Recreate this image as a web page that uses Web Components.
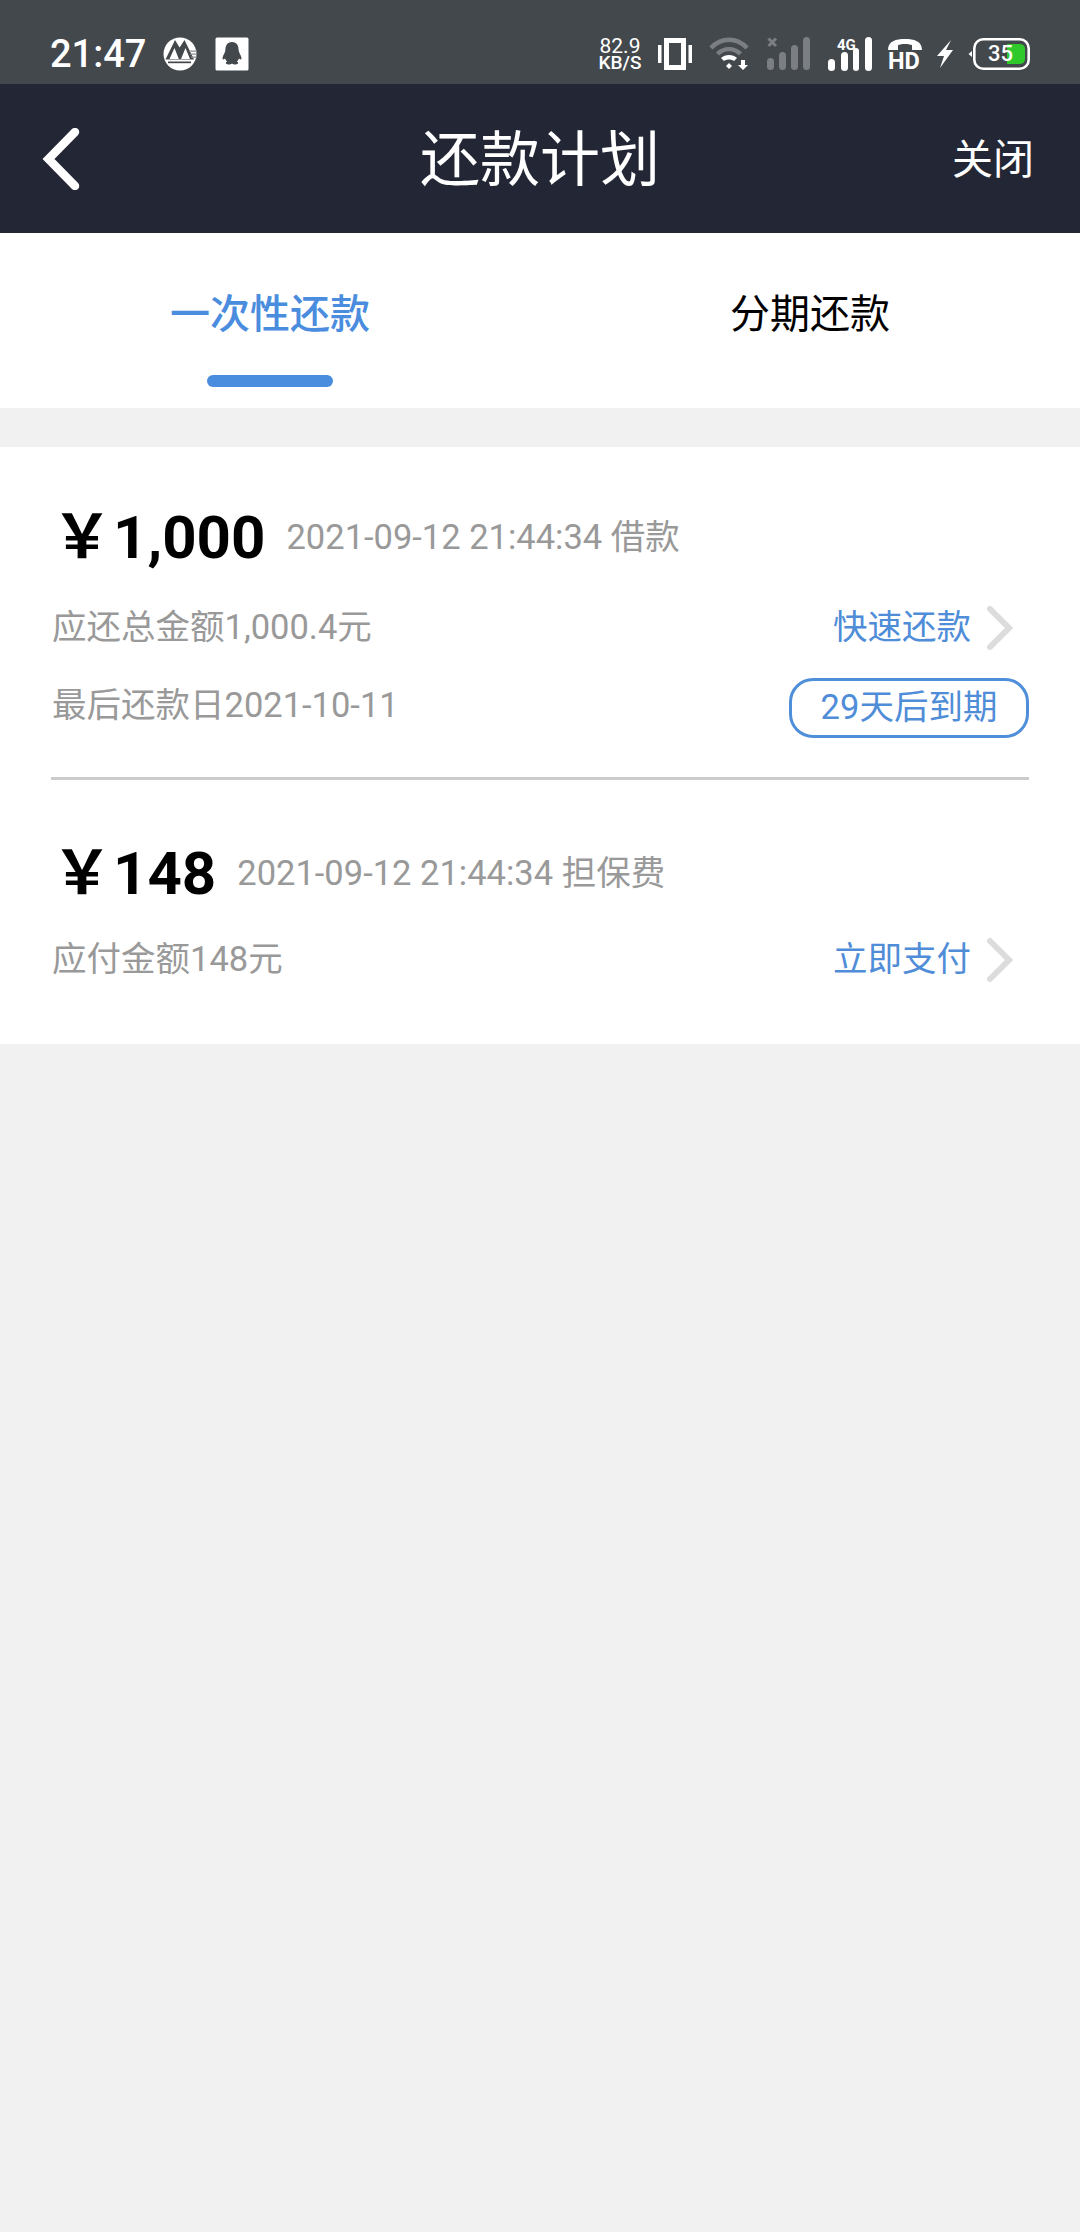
<!DOCTYPE html>
<html>
<head>
<meta charset="utf-8">
<style>
html, body { margin: 0; padding: 0; background: #f1f1f1; }
body { width: 1080px; height: 2232px; overflow: hidden; font-family: Roboto, "Noto Sans CJK SC", sans-serif; }
</style>
</head>
<body>
<status-bar></status-bar>
<nav-bar>还款计划<span slot="action">关闭</span></nav-bar>
<tab-bar>
    <tab-item active>一次性还款</tab-item>
    <tab-item>分期还款</tab-item>
</tab-bar>
<repay-list>
    <repay-item amount="1,000" date="2021-09-12 21:44:34 借款" detail="应还总金额1,000.4元" action="快速还款" due="最后还款日2021-10-11" badge="29天后到期"></repay-item>
    <repay-item tight amount="148" date="2021-09-12 21:44:34 担保费" detail="应付金额148元" action="立即支付"></repay-item>
</repay-list>

<script>
const FONT = 'Roboto, "Noto Sans CJK SC", sans-serif';

class StatusBar extends HTMLElement {
    constructor() {
        super();
        this.attachShadow({ mode: 'open' });
        this.shadowRoot.innerHTML = `
        <style>
            :host { display: flex; box-sizing: border-box; height: 84px; padding: 24px 50px 0 50px; background: #43484c; color: #fff; align-items: center; font-family: ${FONT}; }
            .time { font-size: 38px; font-weight: 500; line-height: 60px; width: 113px; }
            .left, .right { display: flex; align-items: center; }
            .left { gap: 18px; }
            .spacer { flex: 1; }
            .speed { width: 46px; font-size: 19px; font-weight: 500; line-height: 15px; text-align: center; }
            .speed b { display: block; font-size: 21px; font-weight: 400; line-height: 17px; }
            svg { display: block; }
            .bat { position: relative; width: 62px; height: 34px; }
            .bat span { position: absolute; left: 20px; top: 3px; font-size: 22px; line-height: 28px; font-weight: 500; }
        </style>
        <div class="time">21:47</div>
        <div class="left">
            <svg width="34" height="34" viewBox="0 0 34 34">
                <circle cx="17" cy="17" r="16.5" fill="#fff"/>
                <path d="M2.5 22.5 L12 3 L16.6 10.5 L21.5 3 L31 22.5 Z" fill="#43484c"/>
                <path d="M6.5 22 L11.5 11 L15.8 22 Z M18 22 L22.5 11 L27 22 Z" fill="#fff"/>
                <path d="M26 13.5h8v1.2h-8z M27 16.5h7v1.2h-7z M28 19.5h6v1.2h-6z" fill="#8b8e91"/>
                <rect x="5" y="24.5" width="23" height="1.7" fill="#43484c"/>
            </svg>
            <svg width="34" height="34" viewBox="0 0 34 34"><rect x="0.5" y="0.5" width="33" height="33" rx="1.5" fill="#fff"/><path d="M17 5 C12 5 10.4 9 10.4 13 C10.4 15 8.4 17.5 7.6 20.5 C7.2 22.6 8.4 23 10 21.4 C10.5 22.8 11.2 23.8 12.2 24.5 C10.3 25.2 10.3 27.4 13.4 27.4 C15 27.4 16.2 27 17 26.4 C17.8 27 19 27.4 20.6 27.4 C23.7 27.4 23.7 25.2 21.8 24.5 C22.8 23.8 23.5 22.8 24 21.4 C25.6 23 26.8 22.6 26.4 20.5 C25.6 17.5 23.6 15 23.6 13 C23.6 9 22 5 17 5 Z" fill="#43484c"/></svg>
        </div>
        <div class="spacer"></div>
        <div class="right">
            <div class="speed"><b>82.9</b>KB/S</div>
            <svg style="margin-left:15px" width="34" height="32" viewBox="0 0 34 32" fill="#fff"><rect x="0" y="7" width="3.5" height="18"/><rect x="30.5" y="7" width="3.5" height="18"/><path fill-rule="evenodd" d="M6 0H28V32H6Z M11 5V27H23V5Z"/></svg>
            <svg style="margin-left:17px" width="41" height="34" viewBox="0 0 41 34"><path d="M2 11 C12 0 28 0 38 11 M8.5 17 C15 10.5 25 10.5 31.5 17" fill="none" stroke="#7b7f83" stroke-width="4.4"/><path d="M12 21 C16 17 24 17 28 21 L25 24 C22 22 18 22 15 24 Z" fill="#fff"/><path d="M17 29 L20 26 L23 29 L20 32 Z" fill="#fff"/><path d="M32 23 H36 V28 H39 L34 33 L29 28 H32 Z" fill="#fff"/></svg>
            <svg style="margin-left:17px" width="43" height="34" viewBox="0 0 43 34" fill="#7b7f83"><rect x="0" y="21" width="7" height="12" rx="3.5"/><rect x="12" y="15" width="7" height="18" rx="3.5"/><rect x="24" y="8" width="7" height="25" rx="3.5"/><rect x="36" y="0" width="7" height="33" rx="3.5"/><path d="M1.5 1.5 L9 9 M9 1.5 L1.5 9" stroke="#7b7f83" stroke-width="3"/></svg>
            <svg style="margin-left:18px" width="44" height="36" viewBox="0 0 44 36" fill="#fff"><rect x="0" y="23" width="7" height="12" rx="3.5"/><rect x="13" y="16" width="7" height="19" rx="3.5"/><rect x="25" y="12" width="6" height="23" rx="3"/><rect x="37" y="1" width="7" height="34" rx="3.5"/><text x="9" y="14" font-family="Roboto" font-size="15" font-weight="700" fill="#fff">4G</text></svg>
            <svg style="margin-left:16px;margin-right:-2px" width="36" height="44" viewBox="0 0 36 44" fill="#fff"><path d="M0 18 C0 9 8 7 17 7 C26 7 34 9 34 18 L24 18 L24 13 C20 11.5 14 11.5 10 13 L10 18 Z"/><text x="0" y="37" font-family="Roboto" font-size="23.5" font-weight="700" fill="#fff">HD</text></svg>
            <svg style="margin-left:15px" width="16" height="28" viewBox="0 0 16 28" fill="#fff"><path d="M14 0 L0 16 L7 16 L3 28 L16 10 L9 10 Z"/></svg>
            <div class="bat" style="margin-left:15px">
                <svg width="62" height="34" viewBox="0 0 62 34"><rect x="6.3" y="2.3" width="54.4" height="29.4" rx="9" fill="none" stroke="#fff" stroke-width="2.6"/><path d="M0.5 17 L4 14 V20 Z" fill="#fff"/><path d="M39 7 H51 Q57 7 57 12 V22 Q57 27 51 27 H39 Z" fill="#2fc92c"/></svg>
                <span>35</span>
            </div>
        </div>`;
    }
}

class NavBar extends HTMLElement {
    constructor() {
        super();
        this.attachShadow({ mode: 'open' });
        this.shadowRoot.innerHTML = `
        <style>
            :host { display: grid; grid-template-columns: 1fr auto 1fr; align-items: center; box-sizing: border-box; height: 149px; padding: 0 46px; background: #232735; color: #fff; font-family: ${FONT}; }
            svg { display: block; margin-left: -4px; }
            .title { font-size: 60px; line-height: 70px; margin-top: 4px; }
            .action { justify-self: end; font-size: 41px; line-height: 50px; margin-top: 2px; }
        </style>
        <svg width="38" height="62" viewBox="0 0 38 62"><path d="M33 4 L6.5 31 L33 58" fill="none" stroke="#fff" stroke-width="8.5" stroke-linecap="round" stroke-linejoin="miter"/></svg>
        <div class="title"><slot></slot></div>
        <div class="action"><slot name="action"></slot></div>`;
    }
}

class TabBar extends HTMLElement {
    constructor() {
        super();
        this.attachShadow({ mode: 'open' });
        this.shadowRoot.innerHTML = `
        <style>
            :host { display: grid; grid-template-columns: 1fr 1fr; height: 175px; background: #fff; margin-bottom: 39px; }
        </style>
        <slot></slot>`;
    }
}

class TabItem extends HTMLElement {
    constructor() {
        super();
        this.attachShadow({ mode: 'open' });
        this.shadowRoot.innerHTML = `
        <style>
            :host { display: flex; flex-direction: column; align-items: center; box-sizing: border-box; padding-top: 54px; color: #000; font-family: ${FONT}; font-size: 40px; line-height: 56px; }
            :host([active]) { color: #4a8cde; font-weight: 500; }
            .bar { width: 126px; height: 12px; margin-top: 32px; border-radius: 6px; }
            :host([active]) .bar { background: #4a8cde; }
        </style>
        <div><slot></slot></div>
        <div class="bar"></div>`;
    }
}

class RepayList extends HTMLElement {
    constructor() {
        super();
        this.attachShadow({ mode: 'open' });
        this.shadowRoot.innerHTML = `
        <style>
            :host { display: block; box-sizing: border-box; height: 597px; padding: 0 51px; background: #fff; }
            ::slotted(repay-item:first-child) { height: 330px; border-bottom: 3px solid #cbcbcb; }
        </style>
        <slot></slot>`;
    }
}

class RepayItem extends HTMLElement {
    connectedCallback() {
        if (this.shadowRoot) return;
        const a = n => this.getAttribute(n);
        this.attachShadow({ mode: 'open' });
        const due = a('due') ? `
            <div class="row due">
                <span>${a('due')}</span>
                <span class="badge">${a('badge')}</span>
            </div>` : '';
        this.shadowRoot.innerHTML = `
        <style>
            :host { display: block; box-sizing: content-box; font-family: ${FONT}; color: #999; font-size: 34.5px; }
            .head { display: flex; align-items: center; height: 90px; padding: 45px 0 0 1px; }
            :host([tight]) .head { padding-top: 48px; }
            .yen { display: inline-block; width: 61px; font-family: "Noto Sans CJK SC", sans-serif; }
            .amount { color: #000; font-size: 60px; font-weight: 700; line-height: 90px; margin-top: -4px; }
            .date { margin-left: 21px; line-height: 50px; }
            .row { display: flex; justify-content: space-between; align-items: center; height: 60px; padding-left: 1px; line-height: 60px; }
            .detail { margin-top: 15px; }
            :host([tight]) .detail { margin-top: 11px; }
            .due { margin-top: 18px; }
            .action { display: flex; align-items: center; color: #4f8dd8; }
            .action svg { display: block; margin: 2px 16px 0 16px; }
            .badge { box-sizing: border-box; width: 240px; height: 60px; margin-top: 6px; border: 3px solid #4f8ed8; border-radius: 24px; color: #4f8dd8; text-align: center; line-height: 53px; }
        </style>
        <div class="head">
            <span class="amount"><span class="yen">&#xFFE5;</span>${a('amount')}</span>
            <span class="date">${a('date')}</span>
        </div>
        <div class="row detail">
            <span>${a('detail')}</span>
            <span class="action">${a('action')}<svg width="26" height="46" viewBox="0 0 26 46"><path d="M3 4 L22 23 L3 42" fill="none" stroke="#dcdcdc" stroke-width="6" stroke-linecap="round"/></svg></span>
        </div>${due}`;
    }
}

customElements.define('status-bar', StatusBar);
customElements.define('nav-bar', NavBar);
customElements.define('tab-bar', TabBar);
customElements.define('tab-item', TabItem);
customElements.define('repay-list', RepayList);
customElements.define('repay-item', RepayItem);
</script>
</body>
</html>
